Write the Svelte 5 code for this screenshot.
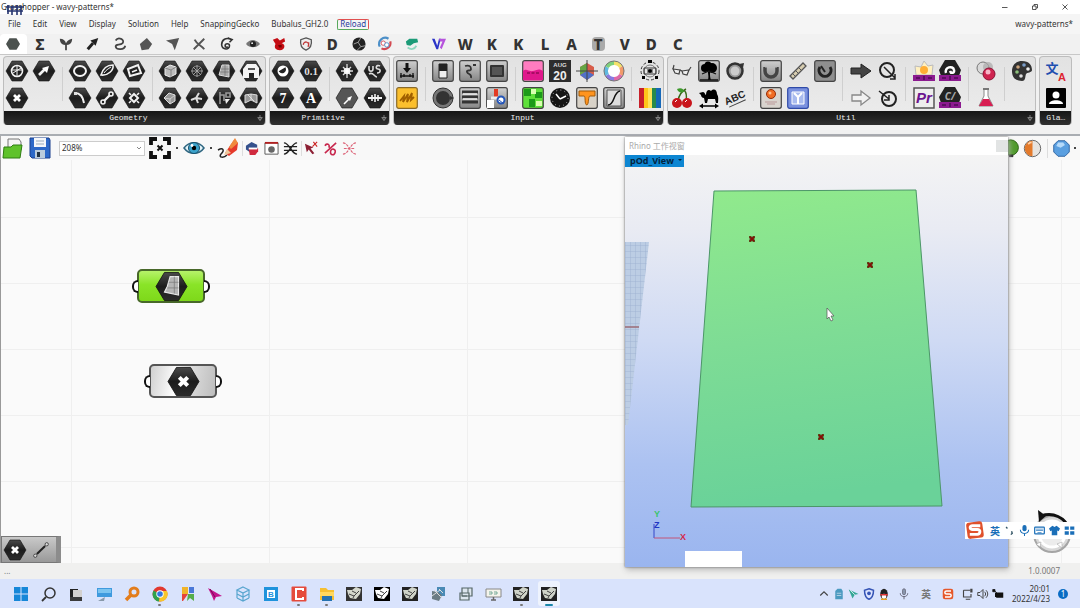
<script>
  const hex = (inner, fill = "url(#hexFill)") =>
    `<path d="M6 1h10l6 10-6 10H6L0 11z" fill="${fill}" stroke="#111" stroke-width=".6"/><g fill="none" stroke="#f2f2f2" stroke-width="1.6">${inner}</g>`;
  const tile = (inner, fill = "url(#tileFill)", edge = "#444") =>
    `<rect x=".7" y=".7" width="20.6" height="20.6" rx="2" fill="${fill}" stroke="${edge}" stroke-width="1.2"/>${inner}`;
  const label = (x, y, size, text, fill = "#f2f2f2", more = "") =>
    `<text x="${x}" y="${y}" font-size="${size}" font-weight="700" text-anchor="middle" fill="${fill}" stroke="none" ${more}>${text}</text>`;

  const serif = `font-family="Liberation Serif"`;
  const sans = `font-family="Liberation Sans"`;
  const cjk = `font-family="Noto Sans CJK SC"`;

  const cross = hex(`<path d="M8 8l6 6M14 8l-6 6" stroke="#fff" stroke-width="2.8"/>`);
  const purpleBar = `<path d="M0 15h22v6H0z" fill="#8b1a8f"/><path d="M3 17h4v2H3zM10 16h2v4h-2zM15 17h4v2h-4z" fill="#5c0f62"/>`;

  // icons are listed row by row, two rows per group
  const panels = [
    {
      name: "Geometry",
      more: true,
      groups: [
        [
          ["Circle CNR", hex(`<circle cx="11" cy="11" r="5.5"/><path d="M6 10h10M11 6v10M7 13l8-5" stroke-width="1"/>`)],
          ["Vector", hex(`<path d="M6 15l6-6" stroke-width="2.6"/><path d="M16 6l-7 2 5 5z" fill="#fff" stroke="none"/>`)],
          ["Point", cross],
        ],
        [
          ["Circle", hex(`<ellipse cx="11" cy="11" rx="6" ry="5" stroke-width="2"/>`)],
          ["Ellipse", hex(`<path d="M5 15C7 8 12 5 17 5c1 5-5 11-12 10z"/><path d="M8 13c2-3 4-4 7-6" stroke-width="1"/>`)],
          ["Plane", hex(`<path d="M5 9l10-4 3 8-11 3z" stroke-width="2"/><path d="M9 12l5-2"/>`)],
          ["Arc", hex(`<path d="M6 6c5 0 8 4 9 10" stroke-width="2"/><path d="M5 5h3v3H5z" fill="#ddd" stroke="none"/>`)],
          ["Line", hex(`<circle cx="7" cy="15" r="2"/><circle cx="15" cy="7" r="2"/><path d="M8 14l6-6" stroke-width="2.4"/>`)],
          ["Rectangle", hex(`<path d="M11 7l4 4-4 4-4-4z" stroke-width="2"/><path d="M6 6l2 2M16 6l-2 2M6 16l2-2M16 16l-2-2"/>`)],
        ],
        [
          ["Box", hex(`<path d="M6 8l5-3 6 2v7l-6 3-5-2z" fill="#bbb" stroke="#eee" stroke-width="1"/><path d="M6 8l6 2 5-3M12 10v7" stroke="#777" stroke-width=".8"/>`)],
          ["Field", hex(`<circle cx="11" cy="11" r="5" stroke="#888" stroke-width="1"/><path d="M11 5v12M5 11h12M7 7l8 8M15 7l-8 8" stroke="#aaa" stroke-width=".9"/>`)],
          ["Surface", hex(`<path d="M9 5h7v12l-10-2z" fill="#aaa" stroke="#ddd" stroke-width="1"/><path d="M12 5v11M8 9h8M7 12h9" stroke="#666" stroke-width=".6"/>`)],
          ["Geometry cache", hex(`<path d="M3 18V9l4-5h9l3 4v10h-5v-5H9v5z" fill="#f4f4f4" stroke="none"/><path d="M8 9h7" stroke="#222"/>`)],
          ["Brep", hex(`<path d="M5 11l5-5 6 2v6l-5 3z" fill="#999" stroke="#ddd" stroke-width="1"/><path d="M5 11l6 1 5-4M11 12v5" stroke="#ddd" stroke-width=".8"/>`)],
          ["Mesh", hex(`<path d="M5 13l5-2 3-5M10 11l2 5M10 11l6 1" stroke="#ddd" stroke-width="2"/>`)],
          ["Group", hex(`<path d="M7 5v12M7 8h4v6M13 6h4v4h-4z" stroke="#999"/><path d="M12 12h5l-4 5z" fill="#eee" stroke="none"/>`)],
          ["Twisted box", hex(`<path d="M5 8l6-1 6 1v8l-6-3-6 3z" fill="#999" stroke="#ddd" stroke-width="1"/><path d="M11 7v6M8 8l6 6" stroke="#eee" stroke-width=".8"/>`)],
        ],
      ],
    },
    {
      name: "Primitive",
      more: true,
      groups: [
        [
          ["Boolean", hex(`<circle cx="11" cy="11" r="5.5" fill="#fff" stroke="none"/><path d="M8 11.5a3 3 0 0 0 5-3z" fill="#222" stroke="#222"/>`)],
          ["Domain", hex(label(11, 15, 11, "0.1", "#ddd", serif))],
          ["Integer", hex(label(11, 16, 14, "7", "#fff", serif))],
          ["Text", hex(label(11, 16, 14, "A", "#fff", serif))],
        ],
        [
          ["Complex", hex(`<path d="M11 4v14M5 11h12M7 7l8 8M15 7l-8 8" stroke="#ddd" stroke-width="1.3"/><circle cx="11" cy="11" r="2.5" fill="#fff"/>`)],
          ["Culture", hex(`<path d="M5 6v3c0 3 4 3 4 0V6M16 6c-4-2-5 3-2 3s3 4-1 4M5 14c4-3 5 3 8 3" stroke="#ddd" stroke-width="1.6"/>`)],
          ["Matrix", hex(`<path d="M8 17l6-6" stroke="#fff"/><path d="M16 9l-5 2 3 3z" fill="#fff" stroke="none"/>`, "#555")],
          ["Time", hex(`<path d="M4 11h14" stroke-width="2"/><path d="M8 8v6M14 8v6M11 7v8"/>`)],
        ],
      ],
    },
    {
      name: "Input",
      more: true,
      groups: [
        [
          ["Number slider", tile(`<path d="M4 16h14M5 13v5M17 13v5M8 14v3M14 14v3" stroke="#111" stroke-width="1.3"/><path d="M9.5 3h3v5h2.5l-4 5-4-5h2.5z" fill="#111"/>`)],
          ["Panel", tile(`<path d="M4 14l4-5-1 6 5-8-1 8 5-9-1 7 3-3" stroke="#a05f00" stroke-width="1.8" fill="none"/>`, "#fbbf2d", "#8a6a2a")],
        ],
        [
          ["Toggle", tile(`<path d="M7 4h8v14H7z" fill="#eee" stroke="#222"/><path d="M7 4h8v7H7z" fill="#222"/>`)],
          ["MD slider", tile(`<path d="M6 6c4-1 6 0 6 3s-5 0-4 3 5 1 4 6M14 5h3" stroke="#333" stroke-width="1.8" fill="none"/>`)],
          ["Value list", tile(`<rect x="4" y="5" width="14" height="12" rx="1" fill="#333"/><path d="M6 7h10v8H6z" fill="#555"/>`)],
          ["Control knob", `<circle cx="11" cy="11" r="10" fill="#777" stroke="#333"/><circle cx="11" cy="11" r="7" fill="#333"/><path d="M18 9l4 2-4 2z" fill="#333"/>`],
          ["Item list", tile(`<path d="M3 5h16M3 10h16M3 15h16" stroke="#333" stroke-width="3"/><path d="M4 7h14M4 12h14" stroke="#eee" stroke-width="1.5"/>`)],
          ["Gene pool", tile(`<path d="M1 13h7v8H1z" fill="#fff"/><path d="M10 2v8" stroke="#e33a22" stroke-width="4"/><path d="M5 11h7" stroke="#eee" stroke-width="3"/><circle cx="15" cy="13" r="3.5" fill="#fff" stroke="#2556b8" stroke-width="2"/><path d="M13 13l5 4" stroke="#2556b8"/>`)],
        ],
        [
          ["Gradient", tile(`<path d="M1 11c4-3 5 1 10 0s5-3 10 0v9H1z" fill="#e0188c"/><path d="M5 13h12" stroke="#70003c" stroke-dasharray="3 1.5"/>`, "#ff7cc0")],
          ["Calendar", `<path d="M0 0h22v22H0z" fill="#2d2d2d"/>${label(11, 7, 6, "AUG", "#ddd", sans)}${label(11, 20, 12, "20", "#eee", sans)}`],
          ["Colour swatch", `<path d="M11 3l7 4v8l-7 5-7-5V7z" fill="#d85d4a"/><path d="M11 3L4 7v8l7-4z" fill="#65a544"/><path d="M4 15l7 5 7-5-7-4z" fill="#5070c8"/><path d="M11 0v22M0 11h22" stroke="#444"/>`],
          ["Colour wheel", `<circle cx="11" cy="11" r="10" fill="#fff"/><g fill="none" stroke-width="4"><path d="M11 3a8 8 0 0 1 7 4" stroke="#f3e26a"/><path d="M18 7a8 8 0 0 1 0 8" stroke="#f29a6a"/><path d="M18 15a8 8 0 0 1-7 4" stroke="#df6aa8"/><path d="M11 19a8 8 0 0 1-7-4" stroke="#8a7ae0"/><path d="M4 15a8 8 0 0 1 0-8" stroke="#60b9e0"/><path d="M4 7a8 8 0 0 1 7-4" stroke="#7fd07c"/></g><circle cx="11" cy="11" r="10" fill="none" stroke="#777"/>`],
          ["Image sampler", tile(`<path d="M2 2h7v7H2zM13 5h7v6h-7zM7 12h6v8H7z" fill="#1c9b18"/><path d="M9 2h5v5H9zM14 14h6v5h-6z" fill="#d9ffb0"/>`, "#5ee03a")],
          ["Clock", `<circle cx="11" cy="11" r="10" fill="#161616"/><path d="M11 12l6-3M11 12L7 7" stroke="#fff" stroke-width="1.5"/><circle cx="11" cy="11" r="8" fill="none" stroke="#bbb" stroke-dasharray="1 3.2"/>`],
          ["Graph mapper", tile(`<path d="M3 4h16v5h-5c-2 0-1 8-3 9-3 0-1-9-3-9H3z" fill="#ff941e" stroke="#a35a08"/>`, "#d8d2c8")],
          ["Bezier graph", tile(`<path d="M4 3h14v16H4z" fill="#ddd" stroke="#555"/><path d="M5 18c7 0 5-13 12-14" stroke="#111" stroke-width="1.5" fill="none"/>`)],
        ],
        [
          ["Object details", `<g fill="none" stroke="#333"><circle cx="11" cy="11" r="9" stroke-dasharray="3 2"/><circle cx="11" cy="11" r="6" stroke="#777"/><path d="M5 8h12v6H5zM9 9v4M13 9v4"/></g><circle cx="11" cy="11" r="2"/><path d="M9 0h4v3H9zM3 16h3v3H3zM16 16h3v3h-3z"/>`],
          ["Spectrum", `<path d="M0 1h22v20H0z" fill="#2a8a4a"/><path d="M0 1h5v20H0z" fill="#c8202a"/><path d="M5 1h4v20H5z" fill="#ffc61a"/><path d="M9 1h4v20H9z" fill="#ffe45a"/><path d="M17 1h5v20h-5z" fill="#1668b8"/>`],
        ],
      ],
    },
    {
      name: "Util",
      more: true,
      groups: [
        [
          ["Glasses", `<g fill="#eee" stroke="#444" stroke-width="1.2"><path d="M2 9l7 1-1 4-4-1zM11 11l7-1-2 5-4-1z"/><path d="M2 9l1-4M9 10l2 1M18 10l2-3" fill="none"/></g>`],
          ["Param viewer", tile(`<path d="M10 20c1-4 0-5 0-8h2c0 4 0 5 1 8z"/><circle cx="7" cy="8" r="4"/><circle cx="14" cy="8" r="5"/><circle cx="10" cy="5" r="3.5"/><path d="M4 14l7-3 7 3M2 20h18" stroke="#111" stroke-width="1.3" fill="none"/>`)],
          ["Timer", `<circle cx="11" cy="11" r="7.5" fill="#999" stroke="#333" stroke-width="2.5"/><circle cx="11" cy="11" r="4.5" fill="#ccc"/><path d="M15 4l5-1-1 5z" fill="#333"/>`],
          ["Cherry picker", `<path d="M7 14C8 7 11 4 15 2M15 14c1-5 0-9-2-11" stroke="#3a6a1c" stroke-width="1.5" fill="none"/><path d="M6 2c4-2 7 0 7 3-4 1-6 0-7-3z" fill="#3d9a2c"/><circle cx="6" cy="16" r="5" fill="#c9151c"/><circle cx="16" cy="16" r="5" fill="#c9151c"/><path d="M4 15l2-2M14 15l2-2" stroke="#fff"/>`],
          ["Camel", `<path d="M1 6l4-1c2 0 2 3 3 3 0-5 3-6 5-4 3-3 6-1 6 3 2 3 1 6 1 9h-2l-1-4H10l-1 4H7l-1-5c-2 0-3-2-3-3z"/><path d="M4 19h14" stroke="#000" stroke-width="1.5"/><path d="M1 19l4-2.5v5zM21 19l-4-2.5v5z"/>`],
          ["Scribble", `<g transform="rotate(-24 11 11)">${label(11, 14, 10, "ABC", "#222", sans)}<path d="M2 17h18" stroke="#444"/></g>`],
        ],
        [
          ["Data dam", tile(`<path d="M5 7v4a6 6 0 0 0 12 0V7" fill="none" stroke="#444" stroke-width="3.5"/><path d="M5 7h12" stroke="#bbb" stroke-width="1"/>`)],
          ["Measure", `<path d="M3 16L16 3l3 3L6 19z" fill="#d7cdb0" stroke="#555" stroke-width="1.3"/><path d="M6 14l2 2M9 11l2 2M12 8l2 2" stroke="#555"/>`],
          ["Trigger", tile(`<path d="M6 7a6 6 0 1 0 10 0" fill="none" stroke="#222" stroke-width="3"/><path d="M11 12L7 6" stroke="#222" stroke-width="2"/>`, "#8f8f8f")],
          ["Recorder", tile(`<circle cx="11" cy="7" r="4.5" fill="#f06b22" stroke="#962e08"/><circle cx="10" cy="6" r="1.5" fill="#ffc08a"/><path d="M5 15h12M7 17h8" stroke="#b99"/>`, "#d9d4ce")],
          ["Fitness", tile(`<path d="M5 5h12v12H5z" fill="#a9bbee" stroke="#fff"/><path d="M7 6l4 4 4-4M11 10v7" fill="none" stroke="#fff" stroke-width="2"/>`, "#7b92df", "#2f4aa8")],
        ],
        [
          ["Relay", `<path d="M1 8h10V4l10 7-10 7v-4H1z" fill="#444" stroke="#222"/>`],
          ["Cluster input", `<circle cx="10" cy="10" r="7" fill="none" stroke="#222" stroke-width="2"/><path d="M7 7l11 11M18 14v5h-5" stroke="#222" stroke-width="1.5" fill="none"/>`],
          ["Jump", `<path d="M2 8h9V4l9 7-9 7v-4H2z" fill="#f2f2f2" stroke="#888" stroke-width="1.3"/>`],
          ["Cluster output", `<circle cx="12" cy="12" r="7" fill="none" stroke="#222" stroke-width="2"/><path d="M2 4l10 8M12 8v5H7" stroke="#222" stroke-width="1.5" fill="none"/>`],
        ],
        [
          ["Cull colors", `<path d="M2 6l6 1 3-6 4 5 5-1-1 10H3z" fill="#fff0c0" stroke="#bbb"/><circle cx="11" cy="10" r="4" fill="#ffae35"/>${purpleBar}`],
          ["Galapagos", `<path d="M6 0h10l6 10-2 6H2L0 10z" fill="#222"/><path d="M7 13c-2-6 7-8 8-3 1 3-3 4-4 1" fill="none" stroke="#fff" stroke-width="2.5"/>${purpleBar}`],
          ["Premiere", `<path d="M1 1h20v20H1z" fill="#eee" stroke="#555" stroke-width="1.5"/>${label(11, 16, 15, "Pr", "#6c1590", `font-style="italic" ${sans}`)}`],
          ["Cycle", `<path d="M6 0h10l6 10-2 6H2L0 10z" fill="#222"/>${label(11, 13, 10, "C/", "#aaa", `font-style="italic"`)}${purpleBar}`],
        ],
        [
          ["Merge", `<circle cx="8" cy="8" r="6" fill="#d9d9d9" stroke="#777"/><circle cx="13" cy="7" r="5" fill="#aaa" opacity=".7"/><circle cx="14" cy="14" r="6" fill="#cf2450" stroke="#8a1234"/><circle cx="13" cy="12" r="2.5" fill="#f7b6c8"/>`],
          ["Flask", `<path d="M9 2h4v7l5 10H4l5-10z" fill="#fff" stroke="#888"/><path d="M8 12h6l4 7H4z" fill="#d81e52"/><path d="M8 2h6" stroke="#777" stroke-width="2"/>`],
        ],
        [["Palette", `<path d="M11 1c7 0 10 4 10 9 0 3-5 2-6 4s0 7-4 7C4 21 1 17 1 11S5 1 11 1z" fill="#333"/><circle cx="7" cy="7" r="1.8" fill="#c9a27a"/><circle cx="13" cy="5" r="1.8" fill="#7a9dc9"/><circle cx="17" cy="9" r="1.8" fill="#eee"/><circle cx="6" cy="12" r="1.8" fill="#8cc07a"/><circle cx="10" cy="16" r="1.8" fill="#ddd"/>`]],
      ],
    },
    {
      name: "Gla…",
      more: false,
      groups: [
        [
          ["Translate", `${label(7, 13, 13, "文", "#1f4fb0", cjk)}${label(17, 21, 11, "A", "#dd2430", sans)}`],
          ["Account", `<rect x="1" y="1" width="20" height="20" rx="1" fill="#000"/><circle cx="11" cy="8" r="3.5" fill="#fff"/><path d="M4 17c0-5 14-5 14 0z" fill="#fff"/>`],
        ],
      ],
    },
  ];

  const columns = (group) => Math.ceil(group.length / 2);

  function panelWeight(panel) {
    const cols = panel.groups.reduce((sum, group) => sum + columns(group), 0);
    return cols * 80 + (panel.groups.length - 1) * 27 + 12;
  }

  const tabs = [
    ["Params", `<path d="M4 1.5h8l4 6.5-4 6.5H4L0 8z" fill="#4c524f"/>`],
    ["Maths", "Σ"],
    ["Sets", `<path d="M7 15V9C3 9 1 6 1 2c4 0 6 2 7 5 1-2 3-4 7-5 0 4-2 7-6 7v6z" fill="#444"/>`],
    ["Vector", `<path d="M2 14l6-7" stroke="#222" stroke-width="3.5"/><path d="M14 1L5 4l6 6z" fill="#222"/>`],
    ["Curve", `<path d="M3 4c3-5 11-1 8 3-3 3-8 0-8 4 1 4 10 4 11-1" fill="none" stroke="#444" stroke-width="2"/>`],
    ["Surface", `<path d="M1 8l8-7 6 7-4 6-8 1z" fill="#555"/>`],
    ["Mesh", `<path d="M0 4l15-3-5 14-3-7z" fill="#555"/>`],
    ["Intersect", `<path d="M2 14L14 2M3 3c3 6 7 6 11 11" fill="none" stroke="#555" stroke-width="2.2"/>`],
    ["Transform", `<path d="M14 3C8 0 3 3 3 9c1 6 9 6 9 1 0-3-5-3-5 0 0 2 2 2 3 1M10 1l5 2-3 3" fill="none" stroke="#333" stroke-width="1.8"/>`],
    ["Display", `<path d="M0 8c4-6 12-6 16 0-4 5-12 5-16 0z" fill="#777"/><circle cx="8" cy="8" r="3.5" fill="#222"/><circle cx="7" cy="7" r="1" fill="#fff"/>`],
    ["Gecko", `<path d="M1 3l5-2 3 3 5-3 1 4-4 2c5 1 4 8-2 8-5 0-7-3-5-7z" fill="#c40d14"/><path d="M7 9h4v3H8z" fill="#700"/>`],
    ["Shield", `<path d="M8 1l6 2c1 6-1 10-6 12C3 13 1 9 2 3z" fill="#eee" stroke="#555" stroke-width="1.5"/><path d="M5 9a3 3 0 1 1 5 2M11 6v5" stroke="#c03a3a" fill="none" stroke-width="1.5"/>`],
    ["Dendro", "D"],
    ["Kangaroo", `<circle cx="8" cy="8" r="7.5" fill="#222"/><path d="M2 8l5-2 3-5M7 6l3 5 5-1M10 11l-4 4" stroke="#aaa" fill="none"/>`],
    ["Ladybug", `<path d="M2 11a7 7 0 0 1 10-9" fill="none" stroke="#4c8fc8" stroke-width="2.5"/><path d="M14 5a7 7 0 0 1-10 8" fill="none" stroke="#d34a52" stroke-width="2.5"/><circle cx="6" cy="7" r="2.5" fill="#fff" stroke="#d34a52"/><circle cx="10" cy="9" r="2.5" fill="#fff" stroke="#4c8fc8"/>`],
    ["Rhino", `<path d="M1 5l4-3h9l1 4-5 1-4 3-4-1z" fill="#1c9b78"/><path d="M3 12c4 3 8 2 10-2" fill="none" stroke="#8fd8c0" stroke-width="2"/>`],
    ["V-Ray", `<path d="M0 2h3l3 8 2-8h2L7 14H5z" fill="#2a35c8"/><path d="M8 2h8l-5 12-2-2 3-7H9z" fill="#b653dd"/>`],
    ...[..."WKKLATVDC"].map((letter) => [letter, letter]),
  ];
  let activeTab = 0;

  const menus = ["File", "Edit", "View", "Display", "Solution", "Help", "SnappingGecko", "Bubalus_GH2.0"];

  const tools = {
    open: `<path d="M6 2h11l2 3v8H6z" fill="#f4f4f4" stroke="#777"/><path d="M2 10h7l2-2h9l-2 13H1z" fill="#5fc22b" stroke="#2f7d12"/>`,
    save: `<path d="M1 1h19l1 2v18H3l-2-2z" fill="#2c68c8" stroke="#1b3f8c"/><path d="M5 1h12v9H5z" fill="#f4f6fa"/><path d="M7 4h8M7 7h8" stroke="#9ab"/><path d="M6 13h10v8H6z" fill="#bcd"/><path d="M8 15h3v5H8z" fill="#234"/>`,
    fit: `<path d="M2 8V2h6M14 2h6v6M20 14v6h-6M8 20H2v-6" fill="none" stroke="#111" stroke-width="3.8"/><path d="M8.5 8.5l5 5M13.5 8.5l-5 5" stroke="#111" stroke-width="2"/>`,
    eye: `<path d="M1 11C6 4 16 4 21 11c-5 7-15 7-20 0z" fill="#e4f3f8" stroke="#2d6580" stroke-width="1.5"/><circle cx="11" cy="11" r="5.5" fill="#3ba3cc" stroke="#17506c"/><circle cx="11" cy="11" r="2.2"/><circle cx="9" cy="8.5" r="1.4" fill="#fff"/>`,
    pen: `<path d="M1 13c5-3 7 0 3 4-3 4 3 4 6 1" stroke="#222" stroke-width="1.5" fill="none"/><path d="M8 16L17 3l4 3-1 7-8 6z" fill="#e5392b"/><path d="M18 1l3 5-7 6-2-2z" fill="#f08a3e"/><path d="M7 18l3-6 4 4z" fill="#ecc79b"/>`,
  };
  const smallTools = [
    ["Preview", `<path d="M1 5l6-4 6 3v6l-6 3-6-4z" fill="#34508c"/><path d="M4 8h10v3l-3 4H5z" fill="#d02a3e"/><path d="M4 8h9" stroke="#fff" stroke-width="2"/>`],
    ["Sketch preview", `<path d="M1 2h14v12H1z" fill="#fff" stroke="#555"/><path d="M1 2h14" stroke="#b02020" stroke-width="2"/><circle cx="8" cy="9" r="3.5" fill="#666"/>`],
    ["Wires", `<path d="M1 2c6 0 8 12 14 12M1 14C7 14 9 2 15 2M1 6h14M1 10h14" fill="none" stroke="#222" stroke-width="1.5"/>`],
    ["Arrow off", `<path d="M1 3l9 4-3 1 4 5-2 1-4-5-2 3z" fill="#8c1f34"/><path d="M9 6l5-5M10 1l4 5" stroke="#c22" stroke-width="1.2"/>`],
    ["Loop off", `<path d="M2 13L14 2M2 5c3-4 6 0 4 2M8 12c0-5 6-4 5 0s-5 3-5 0z" fill="none" stroke="#c8284e" stroke-width="1.7"/>`],
    ["Wires off", `<path d="M1 2c6 0 8 12 14 12M1 14C7 14 9 2 15 2M2 8h12" fill="none" stroke="#dc6478" stroke-width="1.2" stroke-dasharray="3 1"/>`],
  ];

  const rhino = (back, front) =>
    `<path d="M0 1h16v14H0z" fill="${back}"/><path d="M1 4l5 0 4-3 5 2-1 5-4 5-6-1-2-4z" fill="${front}"/><path d="M3 8l5 2 5-5M6 5l4 2M7 12l1-2" fill="none" stroke="#444"/>`;
  const taskbar = [
    ["Start", `<path d="M1 1h6.5v6.5H1zM8.500 1H15v6.5H8.500zM1 8.500h6.500V15H1zM8.500 8.500H15V15H8.500z" fill="#1687d8"/>`],
    ["Search", `<circle cx="9" cy="7" r="5" fill="none" stroke="#333" stroke-width="1.5"/><path d="M5 11l-4 4" stroke="#333" stroke-width="1.8"/>`],
    ["Task view", `<path d="M2 3h8v11H2z" fill="#222"/><path d="M5 4h9v7H5z" fill="#d3d1cf"/><path d="M2 11h12v4H2z" fill="#3b3b3b"/>`],
    ["Remote desktop", `<path d="M1 2h15v9H1z" fill="#3f9ade"/><path d="M2 3h13v4H2z" fill="#7cc4f0"/><path d="M2 15l7-4-1 4z" fill="#8899aa"/>`],
    ["Everything", `<circle cx="10" cy="6" r="4" fill="none" stroke="#e37d1c" stroke-width="3"/><path d="M7 9l-5 5" stroke="#e37d1c" stroke-width="3.5"/>`],
    ["Chrome", `<circle cx="8" cy="8" r="7.5" fill="#e2392f"/><path d="M8 8L1.5 4.5A7.5 7.5 0 0 0 7 15.5z" fill="#2fa24c"/><path d="M8 8l-1 7.5A7.5 7.5 0 0 0 15 5H8z" fill="#f8c62b"/><circle cx="8" cy="8" r="3.7" fill="#fff"/><circle cx="8" cy="8" r="2.8" fill="#3378e0"/>`, "dot"],
    ["Notes", `<path d="M2 1h6v7H2z" fill="#f0b429"/><path d="M9 1h5v6H9z" fill="#4a78d8"/><path d="M2 8h6l-5 7H2z" fill="#e5443b"/><path d="M8 8h6v7l-4-3-3 3z" fill="#55ad4a"/>`],
    ["Plane", `<path d="M1 2l14 8-6 1-2 4-2-5z" fill="#c3148c"/><path d="M3 3l5 8" stroke="#7a0a58"/>`],
    ["Cube", `<path d="M8 1l6 3-6 3-6-3zM2 8l6 3 6-3M2 12l6 3 6-3M2 4v8M14 4v8M8 7v8" fill="none" stroke="#58a5cf" stroke-width="1.2"/>`],
    ["Bandicam", `<path d="M1 1h14v14H1z" fill="#1f93dc"/><path d="M4 4h8v8H4z" fill="#fff"/>${label(8, 11, 8, "B", "#1f93dc", sans)}`],
    ["Camtasia", `<rect x=".5" y=".5" width="15" height="15" rx="1" fill="#e54b3c"/><path d="M12 5V3H5v10h7v-2" fill="none" stroke="#fff" stroke-width="2"/>`, "dot"],
    ["Explorer", `<path d="M1 2h6l2 2h6v10H1z" fill="#f5bf31"/><path d="M1 6h14v4H1z" fill="#ffd75e"/><path d="M3 10h10v5H3z" fill="#2372b2"/>`, "dot"],
    ["Rhino 5", rhino("#333", "#d5d8cd")],
    ["Rhino 6", rhino("#000", "#fff")],
    ["Rhino 7", rhino("#222", "#cfd3c8")],
    ["Tools", `<path d="M7 1h8v9H7z" fill="#4a8ab5"/><path d="M2 5l6 1 4 3-3 6-7-2z" fill="#6b7c84"/><path d="M4 4l8 8M2 10l8-6M9 3l4 4" stroke="#ddd"/>`],
    ["Layout", `<path d="M4 2h10v8H4zM2 7h9v7H2z" fill="#dde6ee" stroke="#566" stroke-width="1.2"/><path d="M4 10h5M10 2v5" stroke="#566"/>`],
    ["Screen", `<path d="M1 3h15v8H1z" fill="#f4f4ec" stroke="#888"/><path d="M6 14h5M8.500 11v3" stroke="#666" stroke-width="1.5"/><path d="M4 6h3v2H4M9 6h3v2H9" fill="none" stroke="#7a9"/>`],
    ["Rhino window", rhino("#222", "#cfd3c8"), "dot"],
    ["Grasshopper", rhino("#222", "#cfd3c8"), "active"],
  ];

  const tray = [
    [
      ["Show hidden", `<path d="M3 10l5-5 5 5" fill="none" stroke="#444" stroke-width="1.5"/>`],
      ["Drive", `<path d="M3 4l3-3h5l2 3v11H3z" fill="#4b9ac0"/><path d="M5 7h6M5 10h6" stroke="#cde"/>`],
      ["Cursor", `<path d="M1 2l13 6-5 1-3 5z" fill="#35a796"/><path d="M3 3l6 6" stroke="#fff"/>`],
      ["Security", `<path d="M8 1l6 2c0 6-1 10-6 12C3 13 2 9 2 3z" fill="#dce4ff" stroke="#3554b5" stroke-width="2"/><circle cx="8" cy="7" r="2.5" fill="#3554b5"/>`],
      ["QQ", `<ellipse cx="8" cy="8" rx="5" ry="7" fill="#222"/><ellipse cx="8" cy="11" rx="3" ry="3.5" fill="#fff"/><path d="M3 8h10v2H3z" fill="#d33"/><path d="M4 15h8" stroke="#e9a020" stroke-width="2"/>`],
    ],
    [
      ["Microphone", `<rect x="6" y="1" width="4" height="8" rx="2" fill="#8895ab" stroke="#667"/><path d="M3 7c0 6 10 6 10 0M8 12v3" fill="none" stroke="#667" stroke-width="1.3"/>`],
      ["Input language", label(8, 13, 13, "英", "#777", cjk)],
      ["Sogou", `<rect x="1" y="1" width="14" height="14" rx="3" fill="#e5582c"/><path d="M12 4H6c-3 0-3 4 0 4h4c3 0 3 4 0 4H4" fill="none" stroke="#fff" stroke-width="2"/>`],
    ],
    [
      ["Network", `<path d="M2 3h9M2 3v9h10V8M5 15h6" fill="none" stroke="#444" stroke-width="1.5"/><path d="M11 1h3v5h-3z" fill="#444"/>`],
      ["Volume", `<path d="M1 6h3l4-4v12l-4-4H1z" fill="none" stroke="#444" stroke-width="1.3"/><path d="M10 5c2 2 2 4 0 6M12 3c3 3 3 7 0 10" fill="none" stroke="#444" stroke-width="1.3"/>`],
      ["Battery", `<path d="M4 6h11v7H6l-2-2z" fill="#111"/><path d="M1 2h3v3H1zM4 4l3 3" fill="#111" stroke="#111"/>`],
    ],
  ];

  const imeTools = [
    ["Punctuation", `<path d="M3 3l2 2M11 9l1 3-2 2" fill="none" stroke="#356" stroke-width="2"/>`],
    ["Voice", `<rect x="5" y="0" width="6" height="9" rx="3" fill="#1b6fb8"/><path d="M2 7c0 7 12 7 12 0M8 12v4" fill="none" stroke="#1b6fb8" stroke-width="1.5"/>`],
    ["Keyboard", `<rect x="1" y="3" width="14" height="10" rx="1" fill="none" stroke="#1b6fb8" stroke-width="1.8"/><path d="M3 6h10M3 8h10M5 11h6" stroke="#1b6fb8"/>`],
    ["Skin", `<path d="M5 1l3 2 3-2 5 4-2 4-2-1v7H4V8L2 9 0 5z" fill="#1b6fb8"/>`],
    ["Toolbox", `<path d="M1 2h6v5H1zM9 2h6v5H9zM1 9h6v5H1zM9 9h6v5H9z" fill="#1b6fb8"/>`],
  ];

  const surfaceGlyph = hex(`<path d="M10 4h6v13l-10-2 2-4z" fill="#b5b5b5" stroke="#e8e8e8" stroke-width=".8"/><path d="M13 4v12M9 8h7M8 12h8" stroke="#777" stroke-width=".5"/>`);

  let zoomLevel = "208%";
  const nodes = [
    { name: "Surface", x: 136, y: 109, selected: true, glyph: surfaceGlyph },
    { name: "Point", x: 148, y: 204, selected: false, glyph: cross },
  ];
  const points = [
    [127, 84],
    [245, 110],
    [196, 282],
  ];
</script>

{#snippet icon(content, size = 22)}
  <svg viewBox="0 0 {size} {size}" aria-hidden="true">{@html content}</svg>
{/snippet}

<svg class="defs" aria-hidden="true">
  <defs>
    <linearGradient id="hexFill" x1="0" y1="0" x2="0" y2="1">
      <stop offset="0" stop-color="#4a4a4a" />
      <stop offset="0.5" stop-color="#1c1c1c" />
      <stop offset="1" stop-color="#2c2c2c" />
    </linearGradient>
    <linearGradient id="tileFill" x1="0" y1="0" x2="0" y2="1">
      <stop offset="0" stop-color="#cfcfcf" />
      <stop offset="1" stop-color="#858585" />
    </linearGradient>
  </defs>
</svg>

<div class="app">
  <header class="title-bar">
    <span class="title">Grasshopper - wavy-patterns*</span>
    <svg class="app-logo" viewBox="0 0 20 12" aria-hidden="true">
      <path d="M1 3h18M3 1v9M7 2v9M12 1v10M16 2v9M2 7h16" stroke="#26356f" stroke-width="1.6" fill="none" />
    </svg>
    <div class="window-buttons">
      <button aria-label="Minimize">{@render icon(`<path d="M2 9h11" stroke="#222" stroke-width="1.5"/>`, 16)}</button>
      <button aria-label="Restore">{@render icon(`<path d="M3 6h7v7H3zM6 6V3h7v7h-3" fill="none" stroke="#222" stroke-width="1.5"/>`, 16)}</button>
      <button aria-label="Close">{@render icon(`<path d="M3 3l10 10M13 3L3 13" stroke="#222" stroke-width="1.5"/>`, 16)}</button>
    </div>
  </header>

  <nav class="menu-bar">
    {#each menus as menu}
      <button>{menu}</button>
    {/each}
    <button class="reload">Reload</button>
    <span class="doc-name">wavy-patterns*</span>
  </nav>

  <div class="tabs">
    {#each tabs as [name, content], i}
      <button class="tab" class:active={activeTab === i} class:dark={content === "T"} aria-label={name} on:click={() => (activeTab = i)}>
        {#if content.length === 1}
          <span>{content}</span>
        {:else}
          {@render icon(content, 16)}
        {/if}
      </button>
    {/each}
  </div>

  <div class="ribbon">
    {#each panels as panel}
      <section class="panel" style="flex-grow: {panelWeight(panel)}">
        <div class="panel-body">
          {#each panel.groups as group}
            <div class="group" style="flex-grow: {columns(group)}; --columns: {columns(group)}">
              {#each group as [name, content]}
                <button aria-label={name}>{@render icon(content)}</button>
              {/each}
            </div>
          {/each}
        </div>
        <div class="panel-name">
          <span>{panel.name}</span>
          {#if panel.more}
            <button class="more" aria-label="More {panel.name}">{@render icon(`<path d="M8 2v11M4 8l4 5 4-5M3 7h10" fill="none" stroke="#999" stroke-width="1.5"/>`, 16)}</button>
          {/if}
        </div>
      </section>
    {/each}
  </div>

  <main class="workspace">
    <div class="canvas-bar">
      <button class="tool" aria-label="Open">{@render icon(tools.open)}</button>
      <button class="tool save" aria-label="Save">{@render icon(tools.save)}</button>
      <select aria-label="Zoom" bind:value={zoomLevel}>
        <option>208%</option>
        <option>100%</option>
        <option>50%</option>
      </select>
      <button class="tool" aria-label="Zoom extents">{@render icon(tools.fit)}</button>
      <i class="caret"></i>
      <button class="tool" aria-label="Named views">{@render icon(tools.eye)}</button>
      <i class="caret"></i>
      <button class="tool" aria-label="Sketch">{@render icon(tools.pen)}</button>
      <div class="small-tools">
        {#each smallTools.slice(0, 3) as [name, content]}
          <button aria-label={name}>{@render icon(content, 16)}</button>
        {/each}
      </div>
      <div class="small-tools">
        {#each smallTools.slice(3) as [name, content]}
          <button aria-label={name}>{@render icon(content, 16)}</button>
        {/each}
      </div>
      <div class="preview-tools">
        <button aria-label="Selected preview">{@render icon(`<circle cx="10" cy="10" r="9" fill="#4f9a2c" stroke="#255a10"/><path d="M8 18h5v3H8z" fill="#222"/>`)}</button>
        <button aria-label="Document preview">{@render icon(`<circle cx="11" cy="11" r="9.5" fill="#e6e3df" stroke="#555"/><path d="M11 2a9 9 0 0 0 0 18z" fill="#e37a2b"/><path d="M6 6c2-2 3-2 4-2" stroke="#ffd2a8" stroke-width="2" fill="none"/>`)}</button>
        <button class="divided" aria-label="Mesh quality">{@render icon(`<path d="M7 2h8l5 5v8l-5 5H7l-5-5V7z" fill="#5a9fe0" stroke="#245a9a"/><path d="M7 4h6l2 3-5 3-5-2z" fill="#b5dafa"/>`)}</button>
        <i class="caret"></i>
      </div>
    </div>

    <div class="canvas">
      {#each nodes as node}
        <div class="node" class:selected={node.selected} style="left: {node.x}px; top: {node.y}px">
          <i class="grip left"></i>
          <button aria-label={node.name}>{@render icon(node.glyph)}</button>
          <i class="grip right"></i>
        </div>
      {/each}

      <div class="recent">
        <button aria-label="Point">{@render icon(cross)}</button>
        <button aria-label="Line">{@render icon(`<circle cx="4" cy="18" r="2" fill="#ddd" stroke="#333"/><circle cx="18" cy="4" r="2" fill="#ddd" stroke="#333"/><path d="M6 16L16 6" stroke="#222" stroke-width="2.5"/>`)}</button>
      </div>

      <svg class="compass" viewBox="0 0 48 48" aria-hidden="true">
        <circle cx="26" cy="27" r="18" fill="#d8d8d8" stroke="#a5a5a5" stroke-width="2" />
        <circle cx="26" cy="27" r="13" fill="#ececec" stroke="#fff" stroke-width="3" />
        <path d="M10 37l5-2-1 5zM36 41l-5-4 5-2z" fill="#fff" stroke="#999" stroke-width=".5" />
        <path d="M15 9c12-4 24 1 28 13" fill="none" stroke="#111" stroke-width="3" />
        <path d="M12 3l8 6-7 6z" fill="#111" />
      </svg>
    </div>

    <footer class="status">
      <span>...</span>
      <span class="version">1.0.0007</span>
    </footer>

    <section class="rhino-window">
      <header>
        <span>Rhino 工作视窗</span>
        <button aria-label="Close view"></button>
      </header>
      <div class="viewport">
        <button class="view-name"><span>pOd_View</span><i></i></button>
        <svg class="scene" viewBox="0 0 383 412" preserveAspectRatio="xMidYMin slice" aria-hidden="true">
          <defs>
            <linearGradient id="sheet" x1="0" y1="0" x2="0.1" y2="1">
              <stop offset="0" stop-color="#91ea8c" />
              <stop offset="0.5" stop-color="#7edc95" />
              <stop offset="1" stop-color="#6ad299" />
            </linearGradient>
            <pattern id="grid" width="5" height="6" patternUnits="userSpaceOnUse">
              <path d="M0 0h5M0 0v6" stroke="#9aafd0" stroke-width=".8" />
            </pattern>
          </defs>
          <path d="M0 87h24L3 270H0z" fill="#bccde4" />
          <path d="M0 87h24L3 270H0z" fill="url(#grid)" />
          <path d="M0 172h14" stroke="#9b6a76" stroke-width="1.5" />
          <path d="M89 36l202-1 26 316-251 1z" fill="url(#sheet)" stroke="#4c9668" />
          {#each points as [x, y]}
            <g transform="translate({x} {y})">
              <path d="M-3-3h2l1 1 1-1h2v2l-1 1 1 1v2h-2l-1-1-1 1h-2v-2l1-1-1-1z" fill="#5c4a1c" />
              <path d="M-2-2l4 4M2-2l-4 4" stroke="#8c0808" stroke-width="1.2" />
            </g>
          {/each}
          <path d="M202 153v11l2-2 2 4 2-1-2-4h3z" fill="#fff" stroke="#555" stroke-width=".7" />
          <path d="M29 369v14" stroke="#3346c8" />
          <path d="M29 383h26" stroke="#c25578" />
          <text x="29" y="362" fill="#3bc46c">Y</text>
          <text x="29" y="373" fill="#2036c4">Z</text>
          <text x="55" y="385" fill="#d6274c">X</text>
          <path d="M60 396h57v16H60z" fill="#fff" />
        </svg>
      </div>
    </section>

    <div class="ime">
      <svg class="ime-logo" viewBox="0 0 22 22" aria-hidden="true">
        <rect x="2" y="2" width="17" height="17" rx="3" fill="#e0512c" transform="rotate(-8 11 11)" />
        <path d="M16 6H8C4 6 5 10 8 10h5c4 0 3 5 0 5H5" fill="none" stroke="#fff" stroke-width="3" />
      </svg>
      <button class="ime-lang">英</button>
      {#each imeTools as [name, content]}
        <button aria-label={name}>{@render icon(content, 16)}</button>
      {/each}
    </div>
  </main>

  <footer class="taskbar">
    <div class="apps">
      {#each taskbar as [name, content, state]}
        <button class="app-button {state ?? ''}" aria-label={name}>{@render icon(content, 16)}</button>
      {/each}
    </div>
    <div class="tray">
      {#each tray as group, i}
        <div class="tray-group" class:wide={i === 1}>
          {#each group as [name, content]}
            <button aria-label={name}>{@render icon(content, 16)}</button>
          {/each}
        </div>
      {/each}
      <time>20:01<br />2022/4/23</time>
      <span class="badge">1</span>
    </div>
  </footer>
</div>

<style>
  :global(body) {
    margin: 0;
  }

  .app {
    display: flex;
    flex-direction: column;
    min-height: 100vh;
    overflow: hidden;
    background: #f1f1f1;
    color: #333;
    font: 8px/12px "Noto Sans", "Noto Sans CJK SC", sans-serif;
  }

  .defs {
    position: absolute;
    width: 0;
    height: 0;
  }

  button {
    display: flex;
    align-items: center;
    justify-content: center;
    padding: 0;
    border: 0;
    background: none;
    color: inherit;
    font: inherit;
  }

  svg {
    display: block;
    overflow: visible;
  }

  .title-bar {
    position: relative;
    display: flex;
    align-items: center;
    height: 14px;
    background: #fff;
  }

  .title {
    flex: 1;
    padding-left: 1px;
  }

  .app-logo {
    position: absolute;
    left: 5px;
    top: 4px;
    width: 20px;
    height: 12px;
  }

  .window-buttons {
    display: flex;
  }

  .window-buttons button {
    width: 30px;
  }

  .window-buttons svg {
    width: 8px;
    height: 8px;
  }

  .menu-bar {
    display: flex;
    align-items: center;
    gap: 12px;
    height: 20px;
    padding: 0 7px 0 8px;
    background: #f5f5f5;
  }

  .reload {
    height: 11px;
    padding: 0 2px;
    border: 1px solid #e05050;
    border-bottom-color: #58a85c;
    border-left-color: #58a85c;
    border-radius: 2px;
    color: #2b3c9c;
    margin-left: -3px;
  }

  .doc-name {
    margin-left: auto;
  }

  .tabs {
    display: grid;
    grid-template-columns: repeat(26, 1fr);
    width: 64%;
    height: 20px;
  }

  .tab {
    border-radius: 4px 4px 0 0;
    color: #333;
    font-size: 15px;
    line-height: 20px;
    font-weight: 800;
  }

  .tab.active {
    background: #fff;
  }

  .tab.dark span {
    width: 13px;
    border-radius: 4px;
    background: #aaa;
    line-height: 14px;
  }

  .tab svg {
    width: 14px;
    height: 14px;
  }

  .ribbon {
    display: flex;
    gap: 3px;
    padding: 1px 8px 9px 3px;
    border-top: 1px solid #c8c8c8;
  }

  .panel {
    flex: 1 1 0;
    min-width: 0;
    box-sizing: border-box;
    border: 1px solid #bdbdbd;
    border-bottom: 0;
    border-radius: 4px;
    overflow: hidden;
    background: linear-gradient(#e2e2e2, #ededed);
  }

  .panel-body {
    display: flex;
    gap: 9px;
    height: 54px;
  }

  .group {
    position: relative;
    flex: 1 1 0;
    display: grid;
    grid-template-rows: 27px 27px;
    grid-template-columns: repeat(var(--columns), 1fr);
    min-width: 0;
  }

  .group + .group::before {
    content: "";
    position: absolute;
    left: -5px;
    top: 10px;
    bottom: 10px;
    border-left: 1px solid #cfcfcf;
  }

  .group svg {
    width: 22px;
    height: 22px;
  }

  .panel-name {
    display: flex;
    align-items: center;
    height: 14px;
    margin: 0 -1px;
    background: linear-gradient(#161616, #303030);
    color: #eee;
    font: 8px/12px "Liberation Mono", "Noto Sans CJK SC", monospace;
  }

  .panel-name span {
    flex: 1;
    text-align: center;
    white-space: nowrap;
  }

  .more {
    width: 12px;
  }

  .more svg {
    width: 8px;
    height: 8px;
  }

  .workspace {
    position: relative;
    flex: 1;
    display: flex;
    flex-direction: column;
    border-top: 2px solid #a9adb2;
  }

  .canvas-bar {
    display: flex;
    align-items: center;
    height: 24px;
    padding: 0 3px 0 1px;
    background: #f8f8f8;
    border-left: 1px solid #aaa;
  }

  .tool svg {
    width: 22px;
    height: 22px;
  }

  .save {
    margin: 0 8px 0 5px;
  }

  select {
    appearance: none;
    width: 86px;
    height: 15px;
    margin-right: 4px;
    padding: 0 2px;
    border: 1px solid #ccc;
    border-radius: 0;
    background: #fff
      url("data:image/svg+xml,%3Csvg xmlns='http://www.w3.org/2000/svg' viewBox='0 0 6 4'%3E%3Cpath d='M1 1l2 2 2-2' fill='none' stroke='%23888'/%3E%3C/svg%3E")
      no-repeat right 2px center / 6px 4px;
    color: #333;
    font: inherit;
  }

  .caret {
    width: 2px;
    height: 2px;
    margin: 0 5px;
    background: #444;
  }

  .small-tools {
    display: flex;
    gap: 4px;
    margin-left: 3px;
    padding-left: 2px;
    border-left: 1px solid #ddd;
  }

  .small-tools svg {
    width: 15px;
    height: 15px;
  }

  .preview-tools {
    display: flex;
    align-items: center;
    gap: 2px;
    margin-left: auto;
  }

  .preview-tools svg {
    width: 19px;
    height: 19px;
  }

  .preview-tools .caret {
    margin: 0 1px;
  }

  .divided {
    margin-left: 3px;
    padding-left: 4px;
    border-left: 1px solid #ddd;
  }

  .canvas {
    position: relative;
    flex: 1;
    min-height: 403px;
    box-sizing: border-box;
    border-left: 1px solid #999;
    background-color: #fafafa;
    background-image: linear-gradient(#efefef 1px, transparent 1px),
      linear-gradient(90deg, #efefef 1px, transparent 1px);
    background-size: 198px 66px;
    background-position: 70px 57px;
  }

  .node {
    position: absolute;
    display: flex;
    justify-content: center;
    align-items: center;
    box-sizing: border-box;
    width: 68px;
    height: 34px;
    border: 2px solid #555;
    border-radius: 5px;
    background: linear-gradient(100deg, #d0d0d0, #fff 40%, #dcdcdc 60%, #bdbdbd);
  }

  .node.selected {
    border-color: #48682a;
    background: linear-gradient(#b6f26a, #8ae428 45%, #7ed81a);
  }

  .node svg {
    width: 31px;
    height: 31px;
  }

  .grip {
    position: absolute;
    box-sizing: border-box;
    width: 6px;
    height: 13px;
    border: 2px solid #111;
    background: #fff;
  }

  .grip.left {
    left: -7px;
    border-right: 0;
    border-radius: 6px 0 0 6px;
  }

  .grip.right {
    right: -7px;
    border-left: 0;
    border-radius: 0 6px 6px 0;
  }

  .recent {
    position: absolute;
    left: 0;
    bottom: 0;
    display: flex;
    align-items: center;
    gap: 6px;
    height: 25px;
    padding: 0 6px 0 2px;
    border: 1px solid #777;
    border-right: 5px solid #8c8c8c;
    background: linear-gradient(#c9c9c9, #999);
  }

  .recent svg {
    width: 22px;
    height: 22px;
  }

  .recent button:last-child svg {
    width: 18px;
    height: 18px;
  }

  .compass {
    position: absolute;
    right: 6px;
    bottom: 6px;
    width: 48px;
    height: 52px;
  }

  .status {
    display: flex;
    justify-content: space-between;
    align-items: center;
    height: 16px;
    padding: 0 20px 0 4px;
    background: #f0f0ef;
    color: #777;
  }

  .rhino-window {
    position: absolute;
    top: 1px;
    right: 72px;
    bottom: 12px;
    display: flex;
    flex-direction: column;
    width: 383px;
    background: #fff;
    box-shadow: 0 0 2px #666, 1px 3px 6px #bbb;
  }

  .rhino-window header {
    display: flex;
    align-items: center;
    justify-content: space-between;
    height: 18px;
    padding-left: 4px;
    color: #aaa;
  }

  .rhino-window header button {
    width: 12px;
    height: 12px;
    background: #e2e4e4;
  }

  .viewport {
    position: relative;
    flex: 1;
    min-height: 0;
    background: linear-gradient(#f4f4f4, #e9ebf3 18%, #cfdaf4 45%, #acc2f1 75%, #9ab5ef);
  }

  .view-name {
    position: absolute;
    gap: 4px;
    height: 12px;
    padding: 0 2px 0 5px;
    background: #0d86d2;
    color: #04243f;
    font: bold 9px/12px "Open Sans", sans-serif;
  }

  .view-name i {
    border: 2px solid transparent;
    border-top-color: #04243f;
  }

  .scene {
    width: 100%;
    height: 100%;
  }

  .scene text {
    font: bold 9px "Liberation Sans", sans-serif;
  }

  .ime {
    position: absolute;
    right: 0;
    bottom: 40px;
    display: flex;
    align-items: center;
    gap: 4px;
    height: 17px;
    padding-right: 5px;
    background: #fff;
  }

  .ime svg {
    width: 11px;
    height: 11px;
  }

  .ime .ime-logo {
    width: 21px;
    height: 21px;
  }

  .ime-lang {
    color: #1b6fb8;
    font: bold 10px/16px "Noto Sans CJK SC", sans-serif;
  }

  .taskbar {
    display: flex;
    justify-content: space-between;
    height: 29px;
    padding: 0 12px 0 7px;
    background: #d9e3fc;
  }

  .apps {
    flex: 1;
    display: grid;
    grid-template-columns: repeat(20, 1fr);
    max-width: 556px;
  }

  .app-button {
    position: relative;
  }

  .app-button svg {
    width: 16px;
    height: 16px;
  }

  .app-button.active {
    margin: 2px 3px;
    background: #eef3fd;
    border-radius: 3px;
  }

  .app-button.dot::after,
  .app-button.active::after {
    content: "";
    position: absolute;
    bottom: 2px;
    width: 3px;
    height: 2px;
    border-radius: 1px;
    background: #777;
  }

  .app-button.active::after {
    bottom: 0;
    width: 8px;
    background: #1a86a8;
  }

  .tray {
    display: flex;
    align-items: center;
    gap: 8px;
  }

  .tray-group {
    display: flex;
    gap: 3px;
  }

  .tray-group.wide {
    gap: 10px;
  }

  .tray svg {
    width: 12px;
    height: 12px;
  }

  time {
    text-align: right;
    line-height: 10px;
  }

  .badge {
    width: 10px;
    height: 10px;
    border-radius: 50%;
    background: #0a6cc4;
    color: #fff;
    line-height: 10px;
    text-align: center;
  }
</style>
